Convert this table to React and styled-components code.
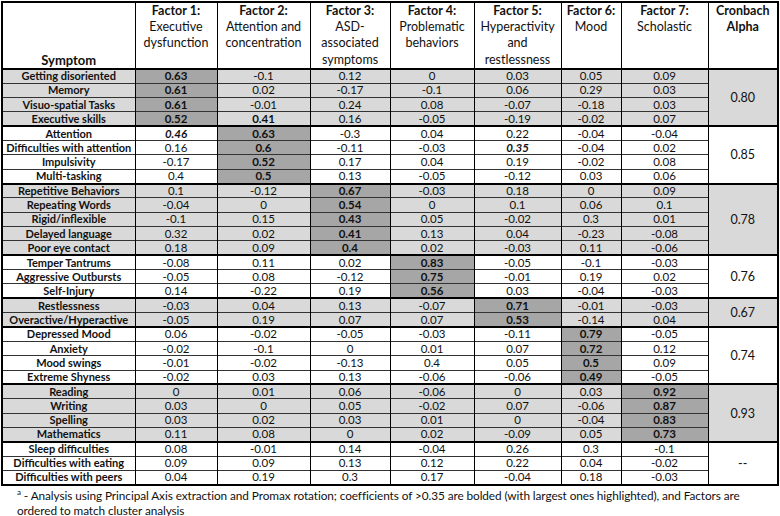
import React from 'react';
import styled, { createGlobalStyle } from 'styled-components';

const LIGHT = '#d9d9d9';
const DARK = '#a6a6a6';

const GlobalStyle = createGlobalStyle`
  body {
    margin: 0;
    background: #fff;
    font-family: Lato, "Liberation Sans", sans-serif;
    color: #111;
  }
`;

const Page = styled.div`
  padding: 1px 0 0 1px;
  width: 780px;
`;

const Table = styled.table`
  border-collapse: collapse;
  width: 776px;
  table-layout: fixed;
  border: 2px solid #000;
`;

const HeadCell = styled.th`
  border: 1px solid #000;
  border-bottom: 2px solid #000;
  vertical-align: ${p => (p.$bottom ? 'bottom' : 'top')};
  text-align: center;
  font-size: 12.5px;
  line-height: 16.2px;
  font-weight: 400;
  padding: 0 2px;
`;

const HeadTitle = styled.div`
  font-weight: 700;
  font-size: ${p => (p.$big ? '13px' : '12.5px')};
`;

const Row = styled.tr`
  background: ${p => (p.$shade ? LIGHT : '#fff')};
  height: 14.35px;
  border-top: ${p => (p.$first ? '2px solid #000' : '1px solid #333')};
`;

const SymptomCell = styled.td`
  border-left: 2px solid #000;
  border-right: 1px solid #000;
  text-align: center;
  font-weight: 700;
  font-size: 11px;
  line-height: 12px;
  padding: 0 1px;
  white-space: nowrap;
`;

const ValueCell = styled.td`
  border-left: 1px solid #000;
  border-right: 1px solid #000;
  text-align: center;
  font-size: 11.5px;
  line-height: 12px;
  padding: 0;
  background: ${p => (p.$hl ? DARK : 'transparent')};
  font-weight: ${p => (p.$bold ? 700 : 400)};
  font-style: ${p => (p.$italic ? 'italic' : 'normal')};
`;

const AlphaCell = styled.td`
  border: 1px solid #000;
  border-bottom: 2px solid #000;
  text-align: center;
  vertical-align: middle;
  font-size: 12.5px;
  background: ${p => (p.$shade ? LIGHT : '#fff')};
`;

const Footnote = styled.div`
  margin: ${p => (p.$first ? '2px' : '0')} 0 0 16px;
  font-size: 11.8px;
  letter-spacing: -0.08px;
  line-height: 15px;
  white-space: nowrap;
`;

const Sup = styled.sup`
  font-size: 8px;
  line-height: 0;
`;

// suffix: * = highlighted, ! = bold, ~ = bold italic
const groups = [
  {
    shade: true,
    alpha: '0.80',
    rows: [
      ['Getting disoriented', '0.63*', '-0.1', '0.12', '0', '0.03', '0.05', '0.09'],
      ['Memory', '0.61*', '0.02', '-0.17', '-0.1', '0.06', '0.29', '0.03'],
      ['Visuo-spatial Tasks', '0.61*', '-0.01', '0.24', '0.08', '-0.07', '-0.18', '0.03'],
      ['Executive skills', '0.52*', '0.41!', '0.16', '-0.05', '-0.19', '-0.02', '0.07'],
    ],
  },
  {
    shade: false,
    alpha: '0.85',
    rows: [
      ['Attention', '0.46~', '0.63*', '-0.3', '0.04', '0.22', '-0.04', '-0.04'],
      ['Difficulties with attention', '0.16', '0.6*', '-0.11', '-0.03', '0.35~', '-0.04', '0.02'],
      ['Impulsivity', '-0.17', '0.52*', '0.17', '0.04', '0.19', '-0.02', '0.08'],
      ['Multi-tasking', '0.4', '0.5*', '0.13', '-0.05', '-0.12', '0.03', '0.06'],
    ],
  },
  {
    shade: true,
    alpha: '0.78',
    rows: [
      ['Repetitive Behaviors', '0.1', '-0.12', '0.67*', '-0.03', '0.18', '0', '0.09'],
      ['Repeating Words', '-0.04', '0', '0.54*', '0', '0.1', '0.06', '0.1'],
      ['Rigid/inflexible', '-0.1', '0.15', '0.43*', '0.05', '-0.02', '0.3', '0.01'],
      ['Delayed language', '0.32', '0.02', '0.41*', '0.13', '0.04', '-0.23', '-0.08'],
      ['Poor eye contact', '0.18', '0.09', '0.4*', '0.02', '-0.03', '0.11', '-0.06'],
    ],
  },
  {
    shade: false,
    alpha: '0.76',
    rows: [
      ['Temper Tantrums', '-0.08', '0.11', '0.02', '0.83*', '-0.05', '-0.1', '-0.03'],
      ['Aggressive Outbursts', '-0.05', '0.08', '-0.12', '0.75*', '-0.01', '0.19', '0.02'],
      ['Self-Injury', '0.14', '-0.22', '0.19', '0.56*', '0.03', '-0.04', '-0.03'],
    ],
  },
  {
    shade: true,
    alpha: '0.67',
    rows: [
      ['Restlessness', '-0.03', '0.04', '0.13', '-0.07', '0.71*', '-0.01', '-0.03'],
      ['Overactive/Hyperactive', '-0.05', '0.19', '0.07', '0.07', '0.53*', '-0.14', '0.04'],
    ],
  },
  {
    shade: false,
    alpha: '0.74',
    rows: [
      ['Depressed Mood', '0.06', '-0.02', '-0.05', '-0.03', '-0.11', '0.79*', '-0.05'],
      ['Anxiety', '-0.02', '-0.1', '0', '0.01', '0.07', '0.72*', '0.12'],
      ['Mood swings', '-0.01', '-0.02', '-0.13', '0.4', '0.05', '0.5*', '0.09'],
      ['Extreme Shyness', '-0.02', '0.03', '0.13', '-0.06', '-0.06', '0.49*', '-0.05'],
    ],
  },
  {
    shade: true,
    alpha: '0.93',
    rows: [
      ['Reading', '0', '0.01', '0.06', '-0.06', '0', '0.03', '0.92*'],
      ['Writing', '0.03', '0', '0.05', '-0.02', '0.07', '-0.06', '0.87*'],
      ['Spelling', '0.03', '0.02', '0.03', '0.01', '0', '-0.04', '0.83*'],
      ['Mathematics', '0.11', '0.08', '0', '0.02', '-0.09', '0.05', '0.73*'],
    ],
  },
  {
    shade: false,
    alpha: '--',
    rows: [
      ['Sleep difficulties', '0.08', '-0.01', '0.14', '-0.04', '0.26', '0.3', '-0.1'],
      ['Difficulties with eating', '0.09', '0.09', '0.13', '0.12', '0.22', '0.04', '-0.02'],
      ['Difficulties with peers', '0.04', '0.19', '0.3', '0.17', '-0.04', '0.18', '-0.03'],
    ],
  },
];

const headers = [
  ['Factor 1:', 'Executive', 'dysfunction'],
  ['Factor 2:', 'Attention and', 'concentration'],
  ['Factor 3:', 'ASD-', 'associated', 'symptoms'],
  ['Factor 4:', 'Problematic', 'behaviors'],
  ['Factor 5:', 'Hyperactivity', 'and', 'restlessness'],
  ['Factor 6:', 'Mood'],
  ['Factor 7:', 'Scholastic'],
];

const widths = [133, 82, 93, 80, 84, 87, 60, 87, 70];

function Value({ raw }) {
  const mark = raw.slice(-1);
  const text = raw.replace(/[*!~]$/, '');
  return (
    <ValueCell
      $hl={mark === '*'}
      $bold={mark === '*' || mark === '!' || mark === '~'}
      $italic={mark === '~'}
    >
      {text}
    </ValueCell>
  );
}

export default function App() {
  return (
    <Page>
      <GlobalStyle />
      <Table>
        <colgroup>
          {widths.map((w, i) => <col key={i} style={{ width: w }} />)}
        </colgroup>
        <thead>
          <tr>
            <HeadCell $bottom>
              <HeadTitle $big>Symptom</HeadTitle>
            </HeadCell>
            {headers.map(([title, ...lines]) => (
              <HeadCell key={title}>
                <HeadTitle>{title}</HeadTitle>
                {lines.map(l => <div key={l}>{l}</div>)}
              </HeadCell>
            ))}
            <HeadCell>
              <HeadTitle>Cronbach</HeadTitle>
              <HeadTitle>Alpha</HeadTitle>
            </HeadCell>
          </tr>
        </thead>
        <tbody>
          {groups.map(g =>
            g.rows.map(([name, ...vals], ri) => (
              <Row key={name} $shade={g.shade} $first={ri === 0}>
                <SymptomCell>{name}</SymptomCell>
                {vals.map((v, vi) => <Value key={vi} raw={v} />)}
                {ri === 0 && (
                  <AlphaCell rowSpan={g.rows.length} $shade={g.shade}>
                    {g.alpha}
                  </AlphaCell>
                )}
              </Row>
            ))
          )}
        </tbody>
      </Table>
      <Footnote $first>
        <Sup>a</Sup> - Analysis using Principal Axis extraction and Promax rotation; coefficients of &gt;0.35 are bolded (with largest ones highlighted), and Factors are
      </Footnote>
      <Footnote>ordered to match cluster analysis</Footnote>
    </Page>
  );
}
